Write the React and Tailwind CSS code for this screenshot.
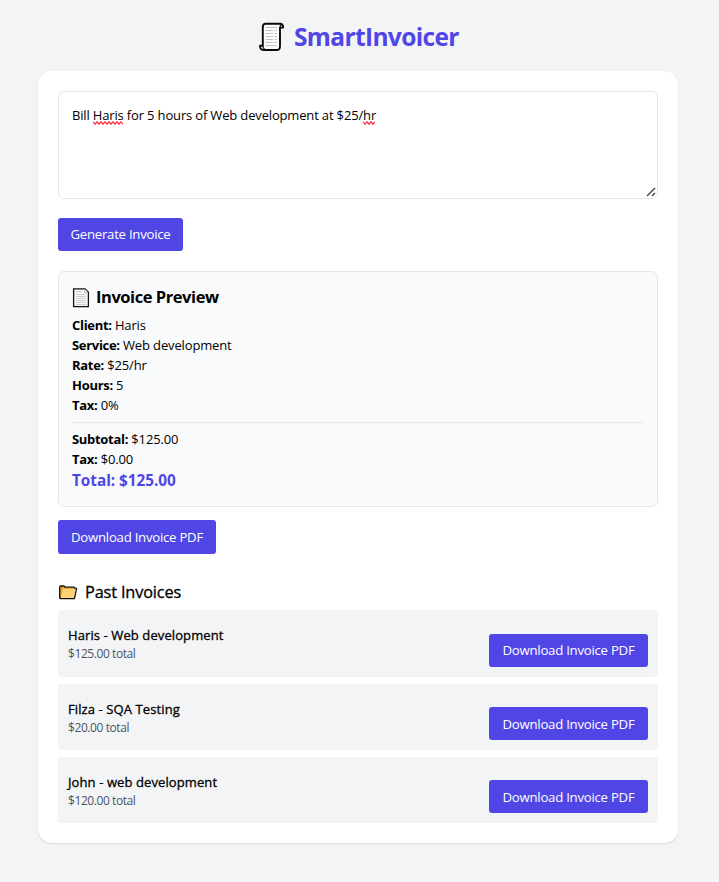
import React from "react";

const pastInvoices = [
  { title: "Haris - Web development", total: "$125.00 total", row: "h-[67px] mb-[7px]", text: "mb-[5px]", button: "" },
  { title: "Filza - SQA Testing", total: "$20.00 total", row: "h-[66px] mb-[7px]", text: "mb-[4px]", button: "pt-[2px]" },
  { title: "John - web development", total: "$120.00 total", row: "h-[66px]", text: "mb-[4px]", button: "pt-[2px]" },
];

function ScrollIcon() {
  return (
    <svg width="26" height="30" viewBox="0 0 26 30" className="shrink-0">
      <path
        d="M6.5 1.7H21Q24.2 1.7 24.2 5.6H21V24.5Q21 28 17.5 28H4.5Q1 28 1 23.8H3.8V5Q3.8 1.7 6.5 1.7Z"
        fill="#fcfcfc"
        stroke="#0a0a0a"
        strokeWidth="1.9"
        strokeLinejoin="round"
      />
      <path d="M21 5.6Q21 3 22.5 2.4M3.8 23.8Q4.4 26.6 6 27.4" fill="none" stroke="#0a0a0a" strokeWidth="1.1" />
      <path d="M6.5 5.5H18M6.5 8.5H14M6.5 11.5H14M6.5 14.5H14M6.5 17.5H14M6.5 20.5H14M6.5 23.5H18M15.5 8.5H18M15.5 11.5H18M15.5 14.5H18M15.5 17.5H18M15.5 20.5H18" stroke="#c4c4c4" strokeWidth="1.1" />
    </svg>
  );
}

function PageIcon() {
  return (
    <svg width="18" height="20" viewBox="0 0 18 20" className="shrink-0">
      <path d="M1.6 .8H13L16.4 4.2V18.6H1.6Z" fill="#f7f7f7" stroke="#111" strokeWidth="1.3" />
      <path d="M12.5 1V4.5H16" fill="#fff" stroke="#999" strokeWidth=".7" />
      <path d="M4 3.5H9.5M4 6.5H14M4 8.5H14M4 10.5H14M4 12.5H14M4 14.5H14M4 16.5H14" stroke="#cfcfcf" strokeWidth="1" />
    </svg>
  );
}

function FolderIcon() {
  return (
    <svg width="20" height="16" viewBox="0 0 20 16" className="shrink-0">
      <path
        d="M1.7 14V3Q1.7 2 2.8 2H6L7.3 3.2H15.8Q16.8 3.2 16.8 4.4H18.6L16.4 14.5H2.2Q1.7 14.5 1.7 14Z"
        fill="#e9a51c"
        stroke="#111"
        strokeWidth="1.3"
        strokeLinejoin="round"
      />
      <path d="M4.6 4.8H17.8L15.8 13.9H2.8Z" fill="#ffd27a" />
    </svg>
  );
}

function Squiggle({ width }) {
  const points = [];
  for (let x = 0; x <= width; x += 2) points.push(`${x},${(x / 2) % 2 ? 3.2 : 0.8}`);
  return (
    <svg width={width} height="4" className="absolute left-0 top-[16px]">
      <polyline points={points.join(" ")} fill="none" stroke="#ff2a3a" strokeWidth="1.2" />
    </svg>
  );
}

function Button({ className, children }) {
  return (
    <button className={`flex items-center justify-center rounded-[3px] bg-[#4f46e5] text-[13.2px] tracking-[-0.25px] text-white whitespace-nowrap ${className}`}>
      {children}
    </button>
  );
}

function Field({ label, value }) {
  return (
    <p className="h-5 leading-5 whitespace-nowrap">
      <strong className="font-bold tracking-[-0.3px]">{label}</strong> <span className="tracking-[-0.14px]">{value}</span>
    </p>
  );
}

export default function App() {
  return (
    <div className="h-[882px] w-[719px] overflow-hidden bg-[#f3f4f6] font-['Open_Sans',sans-serif] text-[13px] tracking-[-0.16px] text-black">
      <header className="flex h-[71px] items-start pl-[259px] pt-[22px]">
        <ScrollIcon />
        <h1 className="ml-[9px] text-[24.5px] font-bold leading-[30px] tracking-[-0.64px] text-[#4f46e5]">SmartInvoicer</h1>
      </header>
      <main className="ml-[38px] h-[772px] w-[640px] rounded-[14px] bg-white p-5 shadow-[0_1px_2px_rgba(0,0,0,0.12)]">
        <div className="relative h-[108px] rounded-[6px] border border-[#e5e7eb] px-[13px] pt-[13px] leading-5 whitespace-nowrap">
          Bill <span className="relative inline-block leading-5">Haris<Squiggle width={30} /></span> for 5 hours of Web development at $25/<span className="relative inline-block leading-5">hr<Squiggle width={12} /></span>
          <svg width="10" height="10" viewBox="0 0 10 10" className="absolute bottom-[1px] right-[1px]">
            <path d="M1 9L9 1M6 9L9 6" stroke="#4a4a4a" strokeWidth="1.5" />
          </svg>
        </div>
        <Button className="mt-[19px] h-[33px] w-[125px]">Generate Invoice</Button>
        <section className="mt-5 h-[236px] rounded-[6px] border border-[#e5e7eb] bg-[#f9fafb] pl-[13px] pr-[14px] pt-[13px]">
          <h2 className="mb-[5px] flex h-[25px] items-center gap-[6px] text-[16.5px] font-bold tracking-[-0.45px]">
            <PageIcon />
            Invoice Preview
          </h2>
          <Field label="Client:" value="Haris" />
          <Field label="Service:" value="Web development" />
          <Field label="Rate:" value="$25/hr" />
          <Field label="Hours:" value="5" />
          <Field label="Tax:" value="0%" />
          <hr className="mb-[6px] mt-[7px] border-[#e5e7eb]" />
          <Field label="Subtotal:" value="$125.00" />
          <Field label="Tax:" value="$0.00" />
          <p className="text-[15.3px] font-bold leading-[23px] tracking-[-0.02px] text-[#4f46e5]">Total: $125.00</p>
        </section>
        <Button className="mt-[13px] h-[34px] w-[158px] pt-[1px]">Download Invoice PDF</Button>
        <h2 className="mt-[26px] flex h-[24px] items-center gap-[7px] text-[16.3px] tracking-[-0.14px] font-medium [-webkit-text-stroke:0.3px_black]">
          <FolderIcon />
          Past Invoices
        </h2>
        <ul className="mt-[6px]">
          {pastInvoices.map((invoice) => (
            <li key={invoice.title} className={`flex items-end justify-between rounded-[3px] bg-[#f3f4f6] p-[10px] ${invoice.row}`}>
              <div className={`whitespace-nowrap ${invoice.text}`}>
                <p className="font-medium leading-5 tracking-[0.1px] [-webkit-text-stroke:0.3px_black]">{invoice.title}</p>
                <p className="text-[12px] leading-[17px] tracking-[-0.42px] text-[#4b5563]">{invoice.total}</p>
              </div>
              <Button className={`h-[33px] w-[159px] ${invoice.button}`}>Download Invoice PDF</Button>
            </li>
          ))}
        </ul>
      </main>
    </div>
  );
}
